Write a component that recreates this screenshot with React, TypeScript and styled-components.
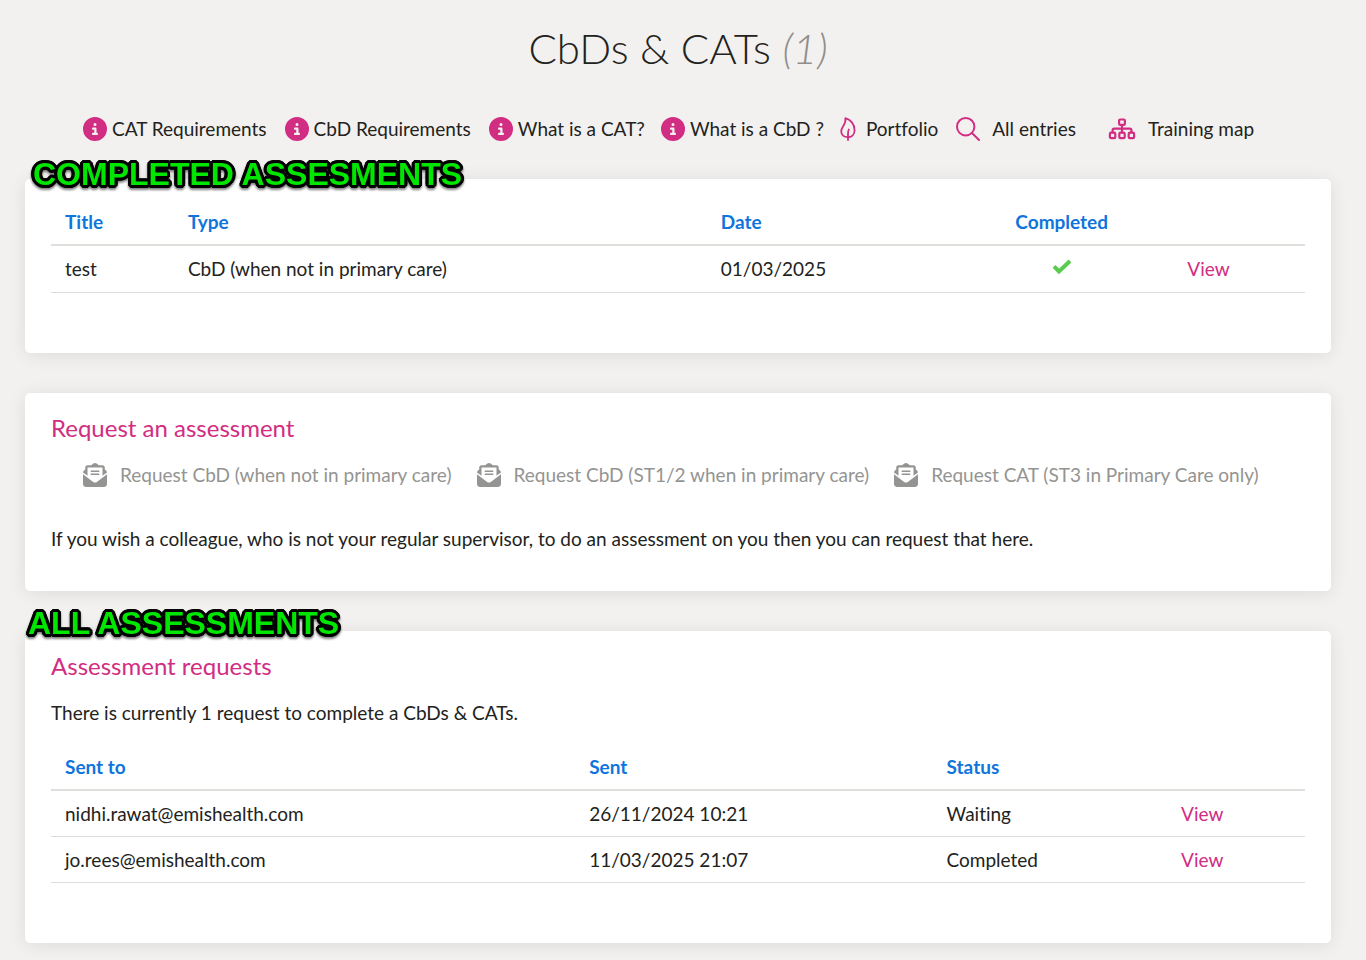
import React from "react";
import styled, { createGlobalStyle } from "styled-components";
import { FaCircleInfo, FaEnvelopeOpenText } from "react-icons/fa6";

const pink = "#d12d82";
const blue = "#0f75dd";
const ink = "#222220";

const GlobalStyle = createGlobalStyle`
  *, *::before, *::after { box-sizing: border-box; }
  body {
    margin: 0;
    background: #f3f1ef;
    color: ${ink};
    font-family: Lato, "Liberation Sans", sans-serif;
    font-size: 19px;
    font-variant-ligatures: none;
    line-height: 28px;
  }
`;

const Page = styled.main`
  padding: 23px 35px 17px 25px;
`;

const PageTitle = styled.h1`
  margin: 0;
  text-align: center;
  font-size: 42px;
  font-weight: 300;
  line-height: 50px;

  em {
    color: #8e8e8c;
  }
`;

const LinkBar = styled.nav`
  display: flex;
  flex-wrap: wrap;
  margin: 42px 0 36px 58px;
`;

const NavLink = styled.a<{ $gap: number; $after: number }>`
  display: flex;
  align-items: center;
  gap: ${(p) => p.$gap}px;
  margin-right: ${(p) => p.$after}px;
  color: ${ink};
  text-decoration: none;
  white-space: nowrap;

  svg {
    color: ${pink};
    flex: none;
  }
`;

const Card = styled.section`
  position: relative;
  padding: 20px 26px 60px;
  background: #fff;
  border-radius: 5px;
  box-shadow: 0 2px 18px rgba(0, 0, 0, 0.09);

  & + & {
    margin-top: 40px;
  }
`;

const RequestCard = styled(Card)`
  padding-bottom: 38px;
`;

const outline = [
  [3, 0], [-3, 0], [0, 3], [0, -3],
  [3, 1], [3, -1], [-3, 1], [-3, -1],
  [1, 3], [-1, 3], [1, -3], [-1, -3],
  [2, 2], [2, -2], [-2, 2], [-2, -2],
]
  .map(([x, y]) => `${x}px ${y}px 0 #000`)
  .join(", ");

const Callout = styled.strong<{ $left: number; $top: number }>`
  position: absolute;
  top: ${(p) => p.$top}px;
  left: ${(p) => p.$left}px;
  color: #00e600;
  font: bold 32px/36px "Liberation Sans", Arial, sans-serif;
  white-space: nowrap;
  text-shadow: ${outline};
  filter: drop-shadow(0 2px 1px rgba(0, 0, 0, 0.5));
`;

const CardTitle = styled.h2`
  margin: 0;
  color: ${pink};
  font-size: 24px;
  font-weight: 400;
  line-height: 30px;
`;

const Text = styled.p`
  margin: 0;
`;

const Summary = styled(Text)`
  margin: 18px 0 17px;
`;

const Requests = styled.div`
  display: flex;
  flex-wrap: wrap;
  gap: 25px;
  margin: 18px 0 36px 32px;
`;

const RequestLink = styled.a`
  display: flex;
  align-items: center;
  gap: 13px;
  color: #949492;
  text-decoration: none;
  white-space: nowrap;
`;

const Table = styled.table`
  width: 100%;
  table-layout: fixed;
  border-collapse: separate;
  border-spacing: 0;
`;

const Col = styled.col<{ $width?: string }>`
  width: ${(p) => p.$width ?? "auto"};
`;

const Th = styled.th<{ $center?: boolean }>`
  height: 47px;
  padding: 0 14px;
  border-bottom: 2px solid #e0dfdb;
  color: ${blue};
  font-weight: 700;
  text-align: ${(p) => (p.$center ? "center" : "left")};
`;

const Td = styled.td`
  height: 46px;
  padding: 8px 14px;
  border-bottom: 1px solid #dddddb;

  svg {
    display: block;
    margin: 5px auto 9px;
  }
`;

const ViewLink = styled.a`
  color: ${pink};
  text-decoration: none;
`;

const Leaf = () => (
  <svg width="16" height="24" viewBox="0 0 16 24" fill="none" stroke="currentColor" strokeWidth="1.8" strokeLinejoin="round" strokeLinecap="round" aria-hidden="true">
    <path d="M5.4 1.2C6.6 7.4 1.2 9.4 1.2 14.3C1.2 17.9 4 20.2 7.8 20.2C11.8 20.2 14.6 17.4 14.6 13.2C14.6 7.2 10.6 2.4 5.4 1.2Z" />
    <path d="M8 23V16.5Q8 14.5 8.8 12.5" />
  </svg>
);

const Search = () => (
  <svg width="24" height="24" viewBox="0 0 24 24" fill="none" stroke="currentColor" strokeWidth="2" strokeLinecap="round" aria-hidden="true">
    <circle cx="9.7" cy="9.7" r="8.7" />
    <path d="M16 16L23 23" />
  </svg>
);

const Sitemap = () => (
  <svg width="28" height="24" viewBox="0 0 28 24" fill="none" stroke="currentColor" strokeWidth="2.2" strokeLinejoin="round" strokeLinecap="round" aria-hidden="true">
    <rect x="11.1" y="2.5" width="5.8" height="5.4" rx="1.2" />
    <rect x="1.9" y="15.7" width="5.4" height="5.4" rx="1.2" />
    <rect x="11.3" y="15.7" width="5.4" height="5.4" rx="1.2" />
    <rect x="20.7" y="15.7" width="5.4" height="5.4" rx="1.2" />
    <path d="M14 8V15.5M4.6 15.5V13.2Q4.6 11.6 6.2 11.6H21.8Q23.4 11.6 23.4 13.2V15.5" />
  </svg>
);

const Tick = () => (
  <svg width="20" height="16" viewBox="0 0 20 16" fill="none" stroke="#58cc4d" strokeWidth="4" role="img" aria-label="Yes">
    <path d="M2 7.3L7 12.4L18 2" />
  </svg>
);

const Info = () => <FaCircleInfo size={24} aria-hidden="true" />;

const links = [
  { label: "CAT Requirements", icon: <Info />, gap: 5, after: 18 },
  { label: "CbD Requirements", icon: <Info />, gap: 5, after: 18 },
  { label: "What is a CAT?", icon: <Info />, gap: 5, after: 16 },
  { label: "What is a CbD ?", icon: <Info />, gap: 5, after: 16 },
  { label: "Portfolio", icon: <Leaf />, gap: 10, after: 18 },
  { label: "All entries", icon: <Search />, gap: 12, after: 32 },
  { label: "Training map", icon: <Sitemap />, gap: 12, after: 0 },
];

const requestTypes = [
  "Request CbD (when not in primary care)",
  "Request CbD (ST1/2 when in primary care)",
  "Request CAT (ST3 in Primary Care only)",
];

const sentRequests = [
  { to: "nidhi.rawat@emishealth.com", sent: "26/11/2024 10:21", status: "Waiting" },
  { to: "jo.rees@emishealth.com", sent: "11/03/2025 21:07", status: "Completed" },
];

export default function App() {
  return (
    <>
      <GlobalStyle />
      <Page>
        <PageTitle>
          CbDs &amp; CATs <em>(1)</em>
        </PageTitle>
        <LinkBar>
          {links.map((l) => (
            <NavLink key={l.label} href="#" $gap={l.gap} $after={l.after}>
              {l.icon}
              <span>{l.label}</span>
            </NavLink>
          ))}
        </LinkBar>

        <Card>
          <Callout $left={8} $top={-23}>COMPLETED ASSESMENTS</Callout>
          <Table>
            <colgroup>
              <Col $width="9.8%" />
              <Col $width="42.5%" />
              <Col $width="19.4%" />
              <Col $width="17.8%" />
              <Col />
            </colgroup>
            <thead>
              <tr>
                <Th>Title</Th>
                <Th>Type</Th>
                <Th>Date</Th>
                <Th $center>Completed</Th>
                <Th />
              </tr>
            </thead>
            <tbody>
              <tr>
                <Td>test</Td>
                <Td>CbD (when not in primary care)</Td>
                <Td>01/03/2025</Td>
                <Td>
                  <Tick />
                </Td>
                <Td>
                  <ViewLink href="#">View</ViewLink>
                </Td>
              </tr>
            </tbody>
          </Table>
        </Card>

        <RequestCard>
          <CardTitle>Request an assessment</CardTitle>
          <Requests>
            {requestTypes.map((r) => (
              <RequestLink key={r} href="#">
                <FaEnvelopeOpenText size={24} aria-hidden="true" />
                <span>{r}</span>
              </RequestLink>
            ))}
          </Requests>
          <Text>
            If you wish a colleague, who is not your regular supervisor, to do an assessment on you then you can
            request that here.
          </Text>
        </RequestCard>

        <Card>
          <Callout $left={3} $top={-26}>ALL ASSESSMENTS</Callout>
          <CardTitle>Assessment requests</CardTitle>
          <Summary>There is currently 1 request to complete a CbDs &amp; CATs.</Summary>
          <Table>
            <colgroup>
              <Col $width="41.8%" />
              <Col $width="28.5%" />
              <Col $width="18.7%" />
              <Col />
            </colgroup>
            <thead>
              <tr>
                <Th>Sent to</Th>
                <Th>Sent</Th>
                <Th>Status</Th>
                <Th />
              </tr>
            </thead>
            <tbody>
              {sentRequests.map((r) => (
                <tr key={r.to}>
                  <Td>{r.to}</Td>
                  <Td>{r.sent}</Td>
                  <Td>{r.status}</Td>
                  <Td>
                    <ViewLink href="#">View</ViewLink>
                  </Td>
                </tr>
              ))}
            </tbody>
          </Table>
        </Card>
      </Page>
    </>
  );
}
